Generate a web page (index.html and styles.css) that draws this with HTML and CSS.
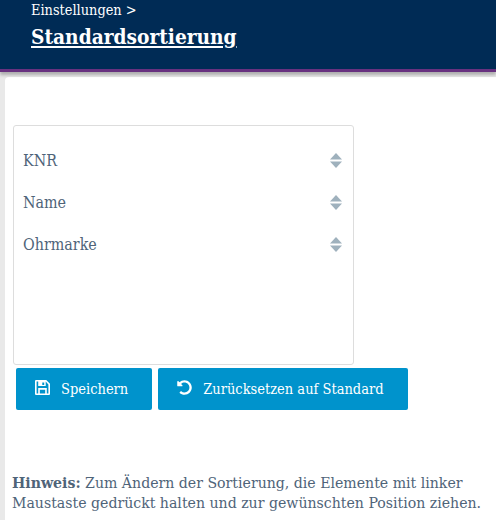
FILE: index.html
```html
<!DOCTYPE html>
<html lang="de">
<head>
    <meta charset="UTF-8">
    <meta name="viewport" content="width=device-width, initial-scale=1.0">
    <title>Standardsortierung</title>
    <link rel="stylesheet" href="styles.css">
</head>
<body>
    <header class="page-header">
        <div class="breadcrumb">Einstellungen &gt;</div>
        <h1 class="page-title">Standardsortierung</h1>
    </header>

    <main class="content">
        <div class="sort-list">
            <div class="sort-item">
                <span>KNR</span>
                <svg class="sort-icon" viewBox="0 0 12 15"><path d="M6 0L12 6.5H0Z"/><path d="M0 8.5H12L6 15Z"/></svg>
            </div>
            <div class="sort-item">
                <span>Name</span>
                <svg class="sort-icon" viewBox="0 0 12 15"><path d="M6 0L12 6.5H0Z"/><path d="M0 8.5H12L6 15Z"/></svg>
            </div>
            <div class="sort-item">
                <span>Ohrmarke</span>
                <svg class="sort-icon" viewBox="0 0 12 15"><path d="M6 0L12 6.5H0Z"/><path d="M0 8.5H12L6 15Z"/></svg>
            </div>
        </div>

        <div class="button-row">
            <button class="action-button save-button">
                <svg class="button-icon" viewBox="0 0 14 14"><path fill-rule="evenodd" d="M1 0H10.5L14 3.5V13Q14 14 13 14H1Q0 14 0 13V1Q0 0 1 0ZM1.5 1.5V12.5H12.5V4.1L10 1.5ZM3 1.5H10V5.5H3ZM6.8 2.4V4.6H8.6V2.4ZM3 7.5H11V12.5H3ZM4.5 9V12.5H9.5V9Z"/></svg>
                Speichern
            </button>
            <button class="action-button reset-button">
                <svg class="button-icon" viewBox="0 0 512 512"><path d="M255.545 8c-66.269.119-126.438 26.233-170.86 68.685L48.971 40.971C33.851 25.851 8 36.559 8 57.941V192c0 13.255 10.745 24 24 24h134.059c21.382 0 32.09-25.851 16.971-40.971l-41.75-41.75c30.864-28.899 70.801-44.907 113.23-45.273 92.398-.798 170.283 73.977 169.484 169.442C423.236 348.009 349.816 424 256 424c-41.127 0-79.997-14.678-110.63-41.556-4.743-4.161-11.906-3.908-16.368.553L89.34 422.659c-4.872 4.872-4.631 12.815.482 17.433C133.798 479.813 192.074 504 256 504c136.966 0 247.999-111.033 248-247.998C504.001 119.193 392.354 7.755 255.545 8z"/></svg>
                Zurücksetzen auf Standard
            </button>
        </div>

        <p class="hint"><strong>Hinweis:</strong> Zum Ändern der Sortierung, die Elemente mit linker Maustaste gedrückt halten und zur gewünschten Position ziehen.</p>
    </main>
</body>
</html>
```

FILE: styles.css
```css
html, body {
    margin: 0;
    height: 100%;
}

body {
    font-family: "DejaVu Serif", serif;
    font-stretch: condensed;
    background-color: #e9e9e9;
    overflow: hidden;
}

.page-header {
    height: 69px;
    padding-left: 31px;
    background-color: #002b55;
    border-bottom: 3px solid #68317f;
    box-shadow: 0 3px 3px rgba(0,0,0,0.25);
    color: white;
    position: relative;
}

.breadcrumb {
    padding-top: 2px;
    font-size: 14.4px;
    line-height: 17px;
}

.page-title {
    margin: 5px 0 0;
    font-size: 20.7px;
    line-height: 26px;
    font-weight: bold;
    text-decoration: underline;
}

.content {
    margin: 5px 0 0 5px;
    padding: 48px 8px 0;
    height: 395px;
    background: white;
    border-top-left-radius: 4px;
    color: #4f6479;
}

.sort-list {
    width: 339px;
    height: 225px;
    border: 1px solid #ddd;
    border-radius: 3px;
    padding-top: 13px;
}

.sort-item {
    height: 42px;
    padding: 0 11px 0 9px;
    display: flex;
    align-items: center;
    justify-content: space-between;
    font-size: 15.9px;
}

.sort-icon {
    width: 12px;
    height: 15px;
    fill: #9fb1bd;
}

.button-row {
    display: flex;
    gap: 6px;
    margin: 3px 0 0 3px;
}

.action-button {
    height: 42px;
    padding: 0 24px 0 19px;
    display: flex;
    align-items: center;
    border: none;
    border-radius: 2px;
    background-color: #0093cc;
    color: white;
    font-family: inherit;
    font-stretch: inherit;
    font-size: 14.5px;
}

.button-icon {
    width: 15px;
    height: 15px;
    margin: -3px 11px 0 0;
    fill: white;
}

.hint {
    margin: 63px 0 0 -1px;
    font-size: 15.7px;
    line-height: 20px;
}
```
